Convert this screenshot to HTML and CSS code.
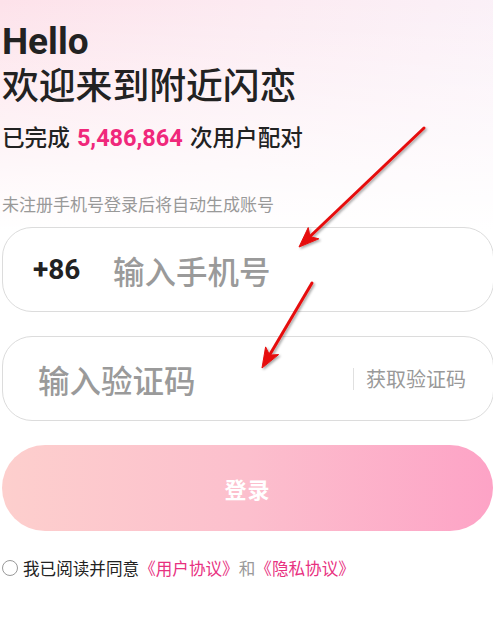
FILE: index.html
```html
<!DOCTYPE html>
<html lang="zh-CN">
<head>
<meta charset="utf-8">
<title>登录</title>
<link rel="stylesheet" href="styles.css">
</head>
<body>
<div class="page">
  <h1 class="title">
    <span class="title-hello">Hello</span>
    <span class="title-welcome">欢迎来到附近闪恋</span>
  </h1>
  <p class="stats">已完成 <span class="stats-num">5,486,864</span> 次用户配对</p>
  <p class="hint">未注册手机号登录后将自动生成账号</p>
  <div class="field field-phone">
    <span class="prefix">+86</span>
    <span class="placeholder">输入手机号</span>
  </div>
  <div class="field field-code">
    <span class="placeholder">输入验证码</span>
    <span class="divider"></span>
    <span class="get-code">获取验证码</span>
  </div>
  <div class="login-btn">登录</div>
  <div class="agree">
    <span class="radio"></span>
    <span class="agree-text">我已阅读并同意</span>
    <span class="link">《用户协议》</span>
    <span class="and">和</span>
    <span class="link">《隐私协议》</span>
  </div>
  <svg class="arrows" width="493" height="618" viewBox="0 0 493 618">
    <defs>
      <filter id="sh" x="-20%" y="-20%" width="140%" height="140%">
        <feDropShadow dx="1.5" dy="1.5" stdDeviation="1.2" flood-color="#000" flood-opacity="0.35"/>
      </filter>
    </defs>
    <g filter="url(#sh)" fill="#e60d0d" stroke="#e60d0d">
      <line x1="424" y1="128" x2="310" y2="236.5" stroke-width="3" stroke-linecap="round"/>
      <polygon points="299,247 308.2,227.6 310,236.7 318.8,238.8" stroke-width="1" stroke-linejoin="round"/>
      <line x1="312" y1="283" x2="269.6" y2="355" stroke-width="3" stroke-linecap="round"/>
      <polygon points="262,368 265.6,346.9 269.6,355.1 278.6,354.6" stroke-width="1" stroke-linejoin="round"/>
    </g>
  </svg>
</div>
</body>
</html>
```
FILE: styles.css
```css
* { box-sizing: border-box; }
html, body { margin: 0; padding: 0; }
body {
  width: 493px;
  height: 618px;
  overflow: hidden;
  font-family: "Roboto", "Noto Sans CJK SC", sans-serif;
  color: #222;
  background:
    linear-gradient(180deg, rgba(255,255,255,0) 0px, #fff 230px),
    linear-gradient(100deg, #fde2ea 0%, #fcebf2 45%, #faf3fa 100%);
  background-repeat: no-repeat;
  background-color: #fff;
}
.page {
  position: relative;
  height: 618px;
  padding: 21px 0 0 2px;
}
.title {
  margin: 0;
  display: flex;
  flex-direction: column;
  padding-left: 0;
}
.title-hello {
  font-family: "Roboto", sans-serif;
  font-size: 37px;
  line-height: 42px;
  font-weight: 700;
  color: #222;
}
.title-welcome {
  font-family: "Noto Sans CJK SC", sans-serif;
  font-size: 36.8px;
  line-height: 40px;
  font-weight: 500;
  color: #222;
}
.stats {
  margin: 19px 0 0 0;
  font-family: "Noto Sans CJK SC", sans-serif;
  font-size: 22.6px;
  line-height: 30px;
  font-weight: 500;
  color: #222;
}
.stats-num {
  font-family: "Roboto", sans-serif;
  font-size: 23.5px;
  font-weight: 700;
  color: #f0287b;
  margin: 0 2px;
}
.hint {
  margin: 39px 0 0 0;
  font-family: "Noto Sans CJK SC", sans-serif;
  font-size: 17px;
  line-height: 24px;
  color: #999;
}
.field {
  display: flex;
  align-items: center;
  width: 492px;
  height: 85px;
  border: 1px solid #dcdcdc;
  border-radius: 30px;
  background: #fff;
}
.field-phone {
  margin-top: 11px;
  padding-left: 30px;
}
.field-code {
  margin-top: 24px;
  padding-left: 35px;
  padding-right: 27px;
}
.prefix {
  font-family: "Roboto", sans-serif;
  font-weight: 700;
  font-size: 28px;
  color: #222;
  width: 80px;
}
.placeholder {
  font-family: "Noto Sans CJK SC", sans-serif;
  font-size: 31.5px;
  font-weight: 500;
  color: #9a9a9a;
}
.field-code .placeholder { flex: 1; }
.divider {
  width: 1px;
  height: 22px;
  background: #e0e0e0;
  margin-right: 12px;
}
.get-code {
  font-family: "Noto Sans CJK SC", sans-serif;
  font-size: 20px;
  color: #999;
}
.login-btn {
  margin-top: 24px;
  width: 491px;
  height: 86px;
  border-radius: 43px;
  background: linear-gradient(90deg, #fdcfcd 0%, #fcbfcd 50%, #fda3c6 100%);
  display: flex;
  align-items: center;
  justify-content: center;
  font-family: "Noto Sans CJK SC", sans-serif;
  font-size: 22px;
  font-weight: 700;
  color: #fff;
  letter-spacing: 1px;
}
.agree {
  margin-top: 25px;
  display: flex;
  align-items: center;
  font-family: "Noto Sans CJK SC", sans-serif;
  font-size: 16.6px;
  line-height: 24px;
}
.radio {
  width: 16px;
  height: 16px;
  border: 1.5px solid #999;
  border-radius: 50%;
  margin-right: 5px;
  flex: none;
}
.agree-text { color: #222; }
.link { color: #e8317f; }
.and { color: #999; }
.arrows {
  position: absolute;
  left: 0;
  top: 0;
  pointer-events: none;
}
```
